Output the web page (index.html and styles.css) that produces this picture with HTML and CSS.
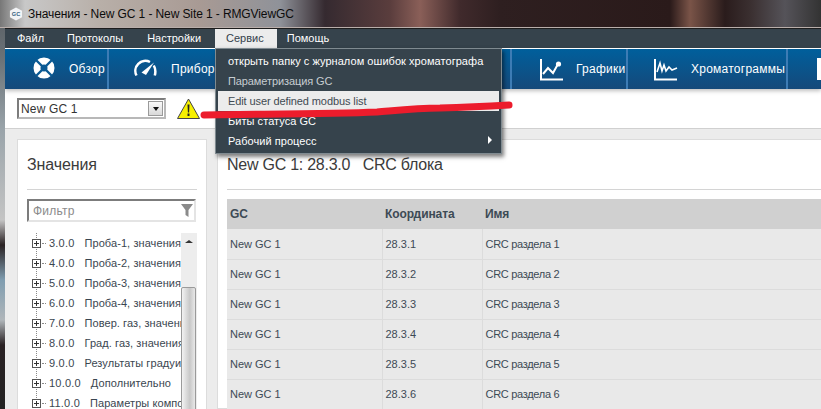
FILE: index.html
```html
<!DOCTYPE html>
<html lang="ru">
<head>
<meta charset="utf-8">
<title>Значения</title>
<link rel="stylesheet" href="styles.css">
</head>
<body>
<div class="window">
  <header class="titlebar">
    <svg class="app-icon" width="14" height="14" viewBox="0 0 15 15"><path d="M7.500 .5 14 4v7l-6.500 3.500L1 11V4z" fill="#f2f4f6"/><text x="7.500" y="10" text-anchor="middle" class="app-icon-text">GC</text></svg>
    <span class="title-text">Значения - New GC 1 - New Site 1 - RMGViewGC</span>
  </header>
  <div class="app">
    <nav class="menubar">
      <span class="menu-item">Файл</span>
      <span class="menu-item">Протоколы</span>
      <span class="menu-item">Настройки</span>
      <span class="menu-item active">Сервис</span>
      <span class="menu-item">Помощь</span>
    </nav>
    <div class="toolbar">
      <div class="tool t-overview">
        <svg class="icon-lift" width="22" height="22" viewBox="0 0 22 22"><circle cx="11" cy="11" r="10.500" fill="#fff"/><path d="M3 3l16 16M19 3 3 19" stroke="#0a5a94" stroke-width="2.400"/><circle cx="11" cy="11" r="3.500" fill="#0a5a94"/></svg>
        <span>Обзор</span>
      </div>
      <div class="tool t-device">
        <svg width="23" height="24" viewBox="0 0 23 24"><path d="M2.500 18.500A10 10 0 0 1 16 5" fill="none" stroke="#fff" stroke-width="2.500"/><path d="M19.800 8.500q2.500 4.500 1 10" fill="none" stroke="#fff" stroke-width="2.500"/><path d="M7.500 15.500 20 5.500 12 18z" fill="#fff"/></svg>
        <span>Прибор</span>
      </div>
      <div class="tool t-hidden"></div>
      <div class="tool t-charts">
        <svg width="24" height="24" viewBox="0 0 24 24"><path d="M1 2v20.500h22" fill="none" stroke="#fff" stroke-width="2"/><path d="M3 17l5-6 5 5 5-9" fill="none" stroke="#fff" stroke-width="2"/><circle cx="18.500" cy="7" r="2.600" fill="#fff"/></svg>
        <span>Графики</span>
      </div>
      <div class="tool t-chroma">
        <svg width="24" height="24" viewBox="0 0 24 24"><path d="M1 2v20.500h22" fill="none" stroke="#fff" stroke-width="2"/><path d="M3 15l3-9 2 8 2-6 2 6 3-4 3 3 5-2" fill="none" stroke="#fff" stroke-width="1.600"/></svg>
        <span>Хроматограммы</span>
      </div>
      <div class="tool t-last"><i class="cut-icon"></i></div>
    </div>
    <div class="subbar">
      <div class="select">
        <span class="select-value">New GC 1</span>
        <span class="select-btn"><i class="arrow-down"></i></span>
      </div>
      <svg class="warn" width="23" height="21" viewBox="0 0 23 21"><path d="M11.500 1 22.500 20.500H.5z" fill="#f6f000" stroke="#444" stroke-width="1"/><path d="M10.500 6.500h2l-.4 8h-1.200zM10.500 15.500h2v2.500h-2z" fill="#222"/></svg>
    </div>
    <main class="content">
      <aside class="side">
        <h2 class="side-title">Значения</h2>
        <div class="filter">
          <span class="filter-text">Фильтр</span>
          <svg width="12" height="13" viewBox="0 0 12 13"><path d="M0 0h12L7.500 6v7l-3-2V6z" fill="#8a8a8a"/></svg>
        </div>
        <div class="tree">
          <ul class="tree-list">
            <li class="node"><i class="plus"></i><span class="dots"></span><span class="num">3.0.0</span><span>Проба-1, значения</span></li>
            <li class="node"><i class="plus"></i><span class="dots"></span><span class="num">4.0.0</span><span>Проба-2, значения</span></li>
            <li class="node"><i class="plus"></i><span class="dots"></span><span class="num">5.0.0</span><span>Проба-3, значения</span></li>
            <li class="node"><i class="plus"></i><span class="dots"></span><span class="num">6.0.0</span><span>Проба-4, значения</span></li>
            <li class="node"><i class="plus"></i><span class="dots"></span><span class="num">7.0.0</span><span>Повер. газ, значения</span></li>
            <li class="node"><i class="plus"></i><span class="dots"></span><span class="num">8.0.0</span><span>Град. газ, значения</span></li>
            <li class="node"><i class="plus"></i><span class="dots"></span><span class="num">9.0.0</span><span>Результаты градуировки</span></li>
            <li class="node"><i class="plus"></i><span class="dots"></span><span class="num">10.0.0</span><span>Дополнительно</span></li>
            <li class="node"><i class="plus"></i><span class="dots"></span><span class="num">11.0.0</span><span>Параметры компонентов</span></li>
          </ul>
          <div class="scrollbar"><i class="arrow-up"></i><div class="thumb"></div></div>
        </div>
      </aside>
      <section class="panel">
        <h1 class="panel-title">New GC 1: 28.3.0&nbsp;&nbsp; CRC блока</h1>
        <table class="grid">
          <thead><tr><th class="c1">GC</th><th class="c2">Координата</th><th>Имя</th></tr></thead>
          <tbody>
            <tr><td>New GC 1</td><td>28.3.1</td><td>CRC раздела 1</td></tr>
            <tr><td>New GC 1</td><td>28.3.2</td><td>CRC раздела 2</td></tr>
            <tr><td>New GC 1</td><td>28.3.3</td><td>CRC раздела 3</td></tr>
            <tr><td>New GC 1</td><td>28.3.4</td><td>CRC раздела 4</td></tr>
            <tr><td>New GC 1</td><td>28.3.5</td><td>CRC раздела 5</td></tr>
            <tr><td>New GC 1</td><td>28.3.6</td><td>CRC раздела 6</td></tr>
          </tbody>
        </table>
      </section>
    </main>
  </div>
</div>
<div class="dropdown">
  <div class="dd-item">открыть папку с журналом ошибок хроматографа</div>
  <div class="dd-item muted">Параметризация GC</div>
  <div class="dd-item hover">Edit user defined modbus list</div>
  <div class="dd-item">Биты статуса GC</div>
  <div class="dd-item">Рабочий процесс<i class="arrow-right"></i></div>
</div>
<svg class="scribble" width="320" height="30" viewBox="0 0 320 30"><path d="M4 20C60 19 130 19 177 17 200 15 217 13 240 13 270 12 290 11 309 10" fill="none" stroke="#ec1c2c" stroke-width="7" stroke-linecap="round"/></svg>
</body>
</html>
```
FILE: styles.css
```css
* { box-sizing: border-box; }
html, body { margin: 0; padding: 0; }
body {
  width: 821px; height: 409px; overflow: hidden; position: relative;
  background: #2a1c1c;
  font-family: "Liberation Sans", Arial, sans-serif;
}
.window {
  height: 409px;
  display: flex; flex-direction: column;
  background: linear-gradient(#555a5e 0, #6b7378 60px, #9aa4aa 130px, #c4c4c4 220px, #2a2224 245px, #7f9db0 280px, #b0b6ba 320px, #2a2224 345px, #222 409px);
  padding-left: 5px;
}
.titlebar {
  height: 28px; margin-left: -5px; padding: 6px 0 0 9px;
  display: flex; align-items: flex-start; gap: 5px;
  border-bottom: 1px solid #b9aeaa;
  flex: none;
  background: linear-gradient(90deg, #777 0, #c8c8c8 25px, #b8afa8 100px, #a89a94 200px, #8f9299 280px, #352a30 325px, #5a3d3d 390px, #8a5f58 420px, #402a2c 460px, #2e1f20 500px, #2a1a1a 670px, #7a5448 690px, #2a1c1c 725px, #3a2f30 750px, #555359 785px, #333 821px);
}
.app-icon { flex: none; margin-top: 1px; }
.app-icon-text { font: bold 6px "Liberation Sans", sans-serif; fill: #33617f; }
.title-text { font-size: 12px; line-height: 16px; color: #0c0c0c; letter-spacing: -.1px; }
.app { flex: 1; display: flex; flex-direction: column; min-height: 0; background: #ececec; overflow: hidden; border-top: 1px solid #1d1d1d; }
.menubar {
  height: 19px; background: #36434c; display: flex; flex: none;
  font-size: 11px; color: #fff;
}
.menu-item { height: 19px; line-height: 18px; padding: 0 12px; }
.menu-item:nth-child(1) { padding-right: 11px; }
.menu-item:nth-child(3) { padding-right: 14px; }
.menu-item:nth-child(4) { padding: 0 13px 0 11px; }
.menu-item:nth-child(5) { padding-left: 10px; }
.menu-item.active { background: #ececec; color: #34414b; }
.toolbar {
  height: 41px; flex: none; display: flex;
  background: linear-gradient(#005f9c, #15497a);
  border-top: 1px solid #fff;
  color: #fff; font-size: 12px; letter-spacing: .25px;
  box-shadow: 0 2px 4px rgba(0,0,0,.25); position: relative;
}
.tool { display: flex; align-items: center; border-right: 2px solid #3d7cb5; height: 40px; white-space: nowrap; flex: none; }
.t-overview { width: 104px; padding-left: 28px; gap: 14px; }
.icon-lift { margin-top: -2px; }
.t-device { width: 112px; padding-left: 25px; gap: 14px; }
.t-hidden { width: 291px; }
.t-charts { width: 116px; padding-left: 28px; gap: 12px; }
.t-chroma { width: 160px; padding-left: 26px; gap: 13px; }
.t-last { flex: 1; border-right: 0; padding-left: 29px; }
.cut-icon { display: block; width: 8px; height: 22px; background: #fff; }
.subbar { height: 40px; flex: none; background: #fff; display: flex; align-items: center; padding-left: 12px; gap: 11px; border-bottom: 1px solid #d0d0d0; }
.select {
  width: 149px; height: 21px; border: 2px solid #7c7c7c; border-right-color: #b8b8b8; border-bottom-color: #b8b8b8;
  display: flex; align-items: center; justify-content: space-between; background: #fff; padding: 0 1px 0 2px;
  font-size: 12px; letter-spacing: .15px; color: #333;
}
.select-btn { width: 15px; height: 15px; background: linear-gradient(#fafafa, #d8d8d8); border: 1px solid #9a9a9a; display: flex; align-items: center; justify-content: center; }
.arrow-down { width: 0; height: 0; border: 3.500px solid transparent; border-top: 4px solid #111; border-bottom: 0; }
.warn { flex: none; }
.content { flex: 1; display: flex; gap: 10px; padding: 10px 0 0 12px; min-height: 0; }
.side { width: 190px; flex: none; background: #fff; border: 1px solid #dcdcdc; padding: 0 9px; height: 300px; }
.side-title { margin: 0; font-weight: 400; font-size: 16px; line-height: 20px; color: #3b3b3b; padding: 15px 0 14px; border-bottom: 1px solid #d4d4d4; letter-spacing: -.1px; }
.filter { margin: 9px 1px 0 0; height: 23px; border: 2px solid #e4e4e4; border-top-color: #7c7c7c; border-left-color: #7c7c7c; display: flex; align-items: center; justify-content: space-between; padding: 0 1px 0 4px; font-size: 12px; letter-spacing: .2px; color: #8b8b8b; }
.tree { display: flex; margin-top: 11px; height: 200px; }
.tree-list {
  list-style: none; margin: 0; padding: 0 0 0 5px; width: 154px; overflow: hidden; flex: none;
  background: repeating-linear-gradient(#888 0 1px, transparent 1px 2px) 9px 0 / 1px 100% no-repeat;
}
.node { height: 20px; display: flex; align-items: center; white-space: nowrap; font-size: 11px; letter-spacing: .08px; color: #3a4650; }
.plus { width: 9px; height: 9px; flex: none; border: 1px solid #555; background: linear-gradient(#333,#333) center / 5px 1px no-repeat, linear-gradient(#333,#333) center / 1px 5px no-repeat, #fff; }
.dots { width: 4px; margin: 0 3px 0 1px; border-top: 1px dotted #888; flex: none; }
.num { margin-right: 10px; letter-spacing: .2px; }
.scrollbar { width: 16px; flex: none; background: #ededed; position: relative; }
.arrow-up { position: absolute; left: 4px; top: 7px; width: 0; height: 0; border: 4px solid transparent; border-bottom: 3px solid #333; border-top: 0; }
.thumb { margin: 54px 0 0 0; width: 15px; height: 150px; border: 1px solid #9a9a9a; border-radius: 2px 2px 0 0; background: linear-gradient(90deg, #f2f2f2, #c8c8c8 60%, #e8e8e8); }
.panel { flex: 1; background: #fff; border: 1px solid #dcdcdc; border-right: 0; padding: 0 0 0 9px; min-width: 0; }
.panel-title { margin: 0; font-weight: 400; font-size: 16px; line-height: 20px; color: #3b3b3b; padding: 15px 0 14px; border-bottom: 1px solid #d4d4d4; letter-spacing: -.25px; }
.grid { margin-top: 9px; width: 100%; border-collapse: collapse; font-size: 11px; color: #3d4a55; table-layout: fixed; }
.grid th { height: 30px; background: #d0d0d0; text-align: left; font-size: 12px; padding: 0 3px; letter-spacing: -.1px; }
.grid td { height: 30px; background: #e9e9e9; padding: 0 3px; border-bottom: 1px solid #dcdcdc; border-right: 1px solid #dcdcdc; }
.grid td:last-child { letter-spacing: -.3px; border-right: 0; }
.c1 { width: 155px; }
.c2 { width: 100px; }
.dropdown { position: absolute; left: 215px; top: 48px; width: 287px; height: 106px; background: #36434c; border: 1px solid #7f8a90; padding: 2px 2px; color: #fff; font-size: 11px; letter-spacing: .05px; box-shadow: 2px 3px 4px rgba(0,0,0,.5); }
.dd-item { height: 20px; line-height: 20px; padding-left: 10px; position: relative; }
.muted { color: #c7cdd1; letter-spacing: -.1px; }
.hover { background: #ececec; color: #3f4a52; letter-spacing: -.1px; }
.arrow-right { position: absolute; right: 7px; top: 5px; width: 0; height: 0; border: 4px solid transparent; border-left: 4px solid #fff; border-right: 0; }
.scribble { position: absolute; left: 200px; top: 95px; }
```
